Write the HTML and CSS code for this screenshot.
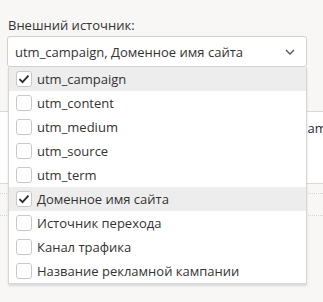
FILE: index.html
```html
<!DOCTYPE html>
<html lang="ru">
<head>
    <meta charset="UTF-8">
    <title>Внешний источник</title>
    <link rel="stylesheet" href="styles.css">
</head>
<body>
    <div class="page">
        <div class="field">
            <label class="label">Внешний источник:</label>
            <div class="select">
                <span class="select-value">utm_campaign, Доменное имя сайта</span>
                <svg class="chevron" width="10" height="6" viewBox="0 0 10 6"><path d="M1 1l4 4 4-4" fill="none" stroke="#555" stroke-width="1.3"/></svg>
                <ul class="options">
                    <li class="option checked"><span class="box"><svg width="12" height="10" viewBox="0 0 12 10"><path d="M1.5 5.2l3 3 6-6.5" fill="none" stroke="#2b2b2b" stroke-width="1.8"/></svg></span>utm_campaign</li>
                    <li class="option"><span class="box"></span>utm_content</li>
                    <li class="option"><span class="box"></span>utm_medium</li>
                    <li class="option"><span class="box"></span>utm_source</li>
                    <li class="option"><span class="box"></span>utm_term</li>
                    <li class="option checked"><span class="box"><svg width="12" height="10" viewBox="0 0 12 10"><path d="M1.5 5.2l3 3 6-6.5" fill="none" stroke="#2b2b2b" stroke-width="1.8"/></svg></span>Доменное имя сайта</li>
                    <li class="option"><span class="box"></span>Источник перехода</li>
                    <li class="option"><span class="box"></span>Канал трафика</li>
                    <li class="option"><span class="box"></span>Название рекламной кампании</li>
                </ul>
            </div>
        </div>
        <div class="under">
            <div class="under-card"><span class="under-text">utm_campaign</span></div>
            <div class="dotted first"></div>
            <div class="dotted"></div>
        </div>
    </div>
</body>
</html>
```
FILE: styles.css
```css
body {
    margin: 0;
    padding: 0;
    background-color: #f8f7f6;
    font-family: "Open Sans", Arial, sans-serif;
    color: #333333;
}
.page {
    width: 323px;
    height: 302px;
    overflow: hidden;
}
.field {
    padding: 16px 16px 0 7px;
}
.label {
    display: block;
    font-size: 13px;
    line-height: 18px;
    margin-left: 1px;
    margin-bottom: 2px;
}
.select {
    position: relative;
    height: 29px;
    border: 1px solid #cfcfcf;
    border-radius: 3px;
    background: #ffffff;
    display: flex;
    align-items: center;
    justify-content: space-between;
    padding: 0 11px 0 7px;
    z-index: 2;
}
.select-value {
    font-size: 13px;
}
.chevron {
    margin-top: 1px;
}
.options {
    position: absolute;
    top: 30px;
    left: 0;
    right: -1px;
    margin: 0;
    padding: 0;
    list-style: none;
    background: #ffffff;
    border: 1px solid #d6d6d6;
    border-top: none;
    box-shadow: 0 2px 2px rgba(0, 0, 0, 0.12);
}
.option {
    display: flex;
    align-items: center;
    height: 24px;
    padding-left: 7px;
    font-size: 13px;
}
.option.checked {
    background: #ededed;
}
.box {
    width: 14px;
    height: 14px;
    border: 1px solid #c9c9c9;
    border-radius: 3px;
    background: #ffffff;
    margin-right: 5px;
    display: flex;
    align-items: center;
    justify-content: center;
}
.under {
    margin-top: 44px;
}
.under-card {
    height: 71px;
    background: #ffffff;
    border-top: 1px solid #d9d9d9;
    border-bottom: 1px solid #d9d9d9;
    overflow: hidden;
    white-space: nowrap;
    padding-left: 271px;
}
.under-text {
    display: inline-block;
    font-size: 13px;
    color: #1f2a44;
    margin-top: 7px;
}
.dotted {
    height: 21px;
    border-bottom: 1px dotted #d4d4d4;
}
.dotted.first {
    height: 9px;
}
```
